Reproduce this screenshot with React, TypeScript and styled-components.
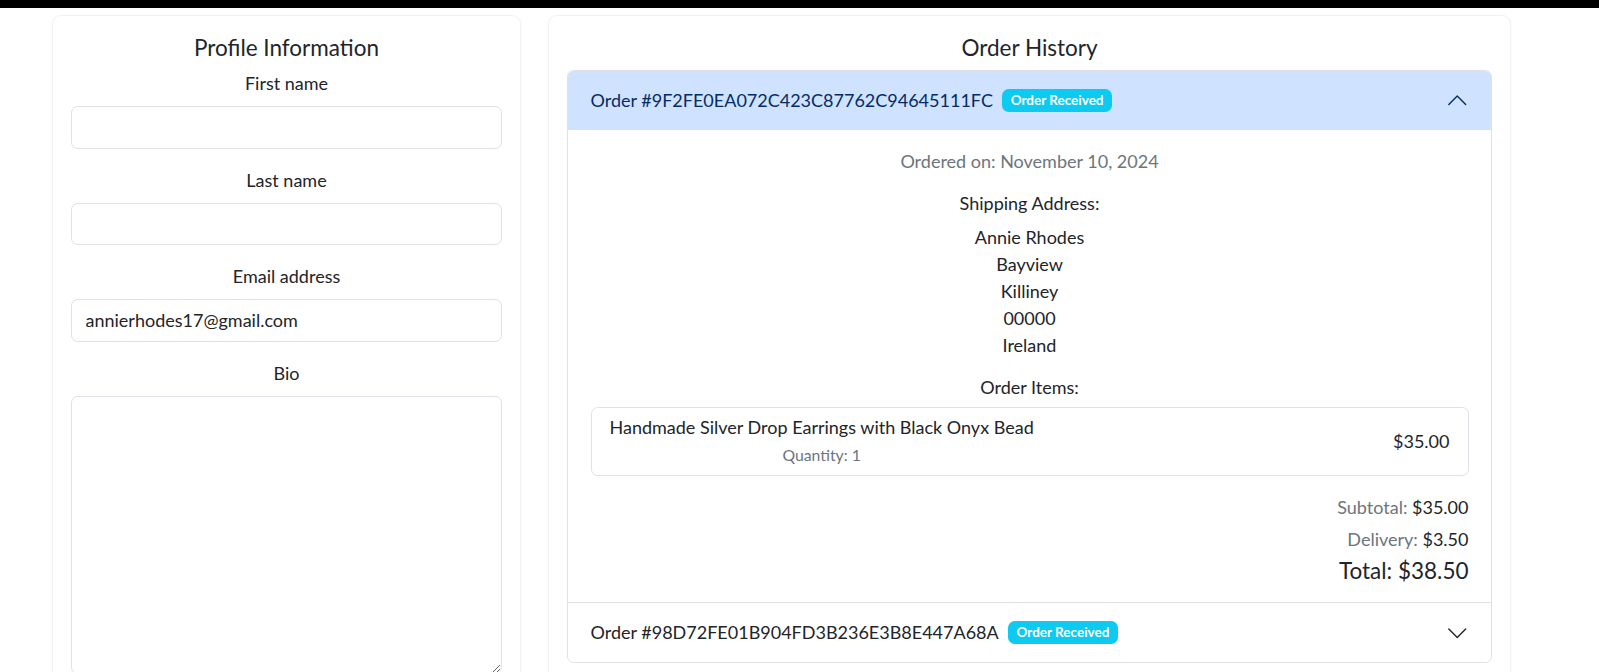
import React from "react";
import styled, { createGlobalStyle } from "styled-components";

const GlobalStyle = createGlobalStyle`
  html {
    font-size: 18px;
  }
  body {
    margin: 0;
    background: #fff;
    color: #212529;
    font-family: "Lato", "Open Sans", sans-serif;
    line-height: 1.5;
    overflow: hidden;
  }
  * {
    box-sizing: border-box;
  }
`;

const TopBar = styled.div`
  height: 8px;
  background: #000;
`;

const Layout = styled.div`
  display: grid;
  grid-template-columns: 469px 963px;
  gap: 27px;
  padding-left: 52px;
  margin-top: 7px;
  align-items: start;
`;

const Card = styled.div`
  background: #fff;
  border: 1px solid #f2f2f2;
  border-radius: 9px;
  box-shadow: 0 1px 3px rgba(0, 0, 0, 0.04);
  padding: 18px;
`;

const CardTitle = styled.h5`
  margin: 0 0 9px;
  font-size: 22.5px;
  font-weight: 400;
  line-height: 1.2;
  text-align: center;
`;

const Field = styled.div`
  margin-bottom: 18px;
`;

const Label = styled.label`
  display: block;
  text-align: center;
  margin-bottom: 9px;
  font-size: 18px;
`;

const inputBase = `
  display: block;
  width: 100%;
  padding: 6.75px 13.5px;
  font-family: inherit;
  font-size: 18px;
  line-height: 1.5;
  color: #212529;
  background: #fff;
  border: 1px solid #dee2e6;
  border-radius: 6.75px;
  outline: none;
`;

const Input = styled.input`
  ${inputBase}
`;

const TextArea = styled.textarea`
  ${inputBase}
  height: 278px;
  resize: vertical;
`;

const Accordion = styled.div`
  border: 1px solid #dee2e6;
  border-radius: 6.75px;
  overflow: hidden;
`;

const Item = styled.div<{ $first?: boolean }>`
  border-top: ${(p) => (p.$first ? "none" : "1px solid #dee2e6")};
`;

const Header = styled.button<{ $open?: boolean }>`
  display: flex;
  align-items: center;
  width: 100%;
  padding: 16px 22.5px;
  font-family: inherit;
  font-size: 18px;
  line-height: 27px;
  text-align: left;
  border: none;
  cursor: pointer;
  background: ${(p) => (p.$open ? "#cfe2ff" : "#fff")};
  color: ${(p) => (p.$open ? "#052c65" : "#212529")};
  box-shadow: ${(p) => (p.$open ? "inset 0 -1px 0 #dee2e6" : "none")};
`;

const Badge = styled.span`
  display: inline-block;
  margin-left: 9px;
  padding: 4.7px 8.8px;
  font-size: 13.5px;
  font-weight: 700;
  line-height: 1;
  color: #fff;
  background: #0dcaf0;
  border-radius: 6.75px;
`;

const Chevron = styled.svg<{ $open?: boolean }>`
  margin-left: auto;
  width: 22.5px;
  height: 22.5px;
  flex-shrink: 0;
  transform: ${(p) => (p.$open ? "rotate(-180deg)" : "none")};
`;

const Body = styled.div`
  padding: 18px 22.5px;
  text-align: center;
`;

const Muted = styled.p`
  margin: 0 0 18px;
  color: #6c757d;
`;

const SubHeading = styled.h6`
  margin: 0 0 9px;
  font-size: 18px;
  font-weight: 400;
  line-height: 1.2;
`;

const Address = styled.div`
  margin-bottom: 18px;
`;

const Line = styled.p`
  margin: 0;
`;

const ListItem = styled.div`
  display: flex;
  align-items: center;
  justify-content: space-between;
  padding: 9px 18px;
  border: 1px solid #dee2e6;
  border-radius: 6.75px;
`;

const ItemInfo = styled.div`
  text-align: center;
`;

const ItemName = styled.h6`
  margin: 0 0 4px;
  font-size: 18px;
  font-weight: 400;
  line-height: 1.2;
`;

const Qty = styled.small`
  display: block;
  font-size: 15.75px;
  color: #6c757d;
`;

const Summary = styled.div`
  margin-top: 18px;
  text-align: right;
`;

const SummaryRow = styled.p`
  margin: 0 0 4.5px;
`;

const Key = styled.span`
  color: #6c757d;
`;

const Total = styled.h5`
  margin: 0;
  font-size: 22.5px;
  font-weight: 400;
  line-height: 1.2;
`;

const ChevronIcon = ({ open }: { open?: boolean }) => (
  <Chevron $open={open} viewBox="0 0 16 16" fill="none">
    <path
      d="M1.646 4.646a.5.5 0 0 1 .708 0L8 10.293l5.646-5.647a.5.5 0 0 1 .708.708l-6 6a.5.5 0 0 1-.708 0l-6-6a.5.5 0 0 1 0-.708z"
      fill={open ? "#052c65" : "#212529"}
    />
  </Chevron>
);

const fields = [
  { label: "First name", value: "" },
  { label: "Last name", value: "" },
  { label: "Email address", value: "annierhodes17@gmail.com" },
];

const addressLines = ["Annie Rhodes", "Bayview", "Killiney", "00000", "Ireland"];

const App = () => {
  return (
    <>
      <GlobalStyle />
      <TopBar />
      <Layout>
        <Card>
          <CardTitle>Profile Information</CardTitle>
          {fields.map((f) => (
            <Field key={f.label}>
              <Label>{f.label}</Label>
              <Input defaultValue={f.value} />
            </Field>
          ))}
          <Field>
            <Label>Bio</Label>
            <TextArea />
          </Field>
        </Card>

        <Card>
          <CardTitle>Order History</CardTitle>
          <Accordion>
            <Item $first>
              <Header $open>
                Order #9F2FE0EA072C423C87762C94645111FC
                <Badge>Order Received</Badge>
                <ChevronIcon open />
              </Header>
              <Body>
                <Muted>Ordered on: November 10, 2024</Muted>
                <SubHeading>Shipping Address:</SubHeading>
                <Address>
                  {addressLines.map((l) => (
                    <Line key={l}>{l}</Line>
                  ))}
                </Address>
                <SubHeading>Order Items:</SubHeading>
                <ListItem>
                  <ItemInfo>
                    <ItemName>Handmade Silver Drop Earrings with Black Onyx Bead</ItemName>
                    <Qty>Quantity: 1</Qty>
                  </ItemInfo>
                  <span>$35.00</span>
                </ListItem>
                <Summary>
                  <SummaryRow>
                    <Key>Subtotal:</Key> $35.00
                  </SummaryRow>
                  <SummaryRow>
                    <Key>Delivery:</Key> $3.50
                  </SummaryRow>
                  <Total>Total: $38.50</Total>
                </Summary>
              </Body>
            </Item>
            <Item>
              <Header>
                Order #98D72FE01B904FD3B236E3B8E447A68A
                <Badge>Order Received</Badge>
                <ChevronIcon />
              </Header>
            </Item>
          </Accordion>
        </Card>
      </Layout>
    </>
  );
};

export default App;
